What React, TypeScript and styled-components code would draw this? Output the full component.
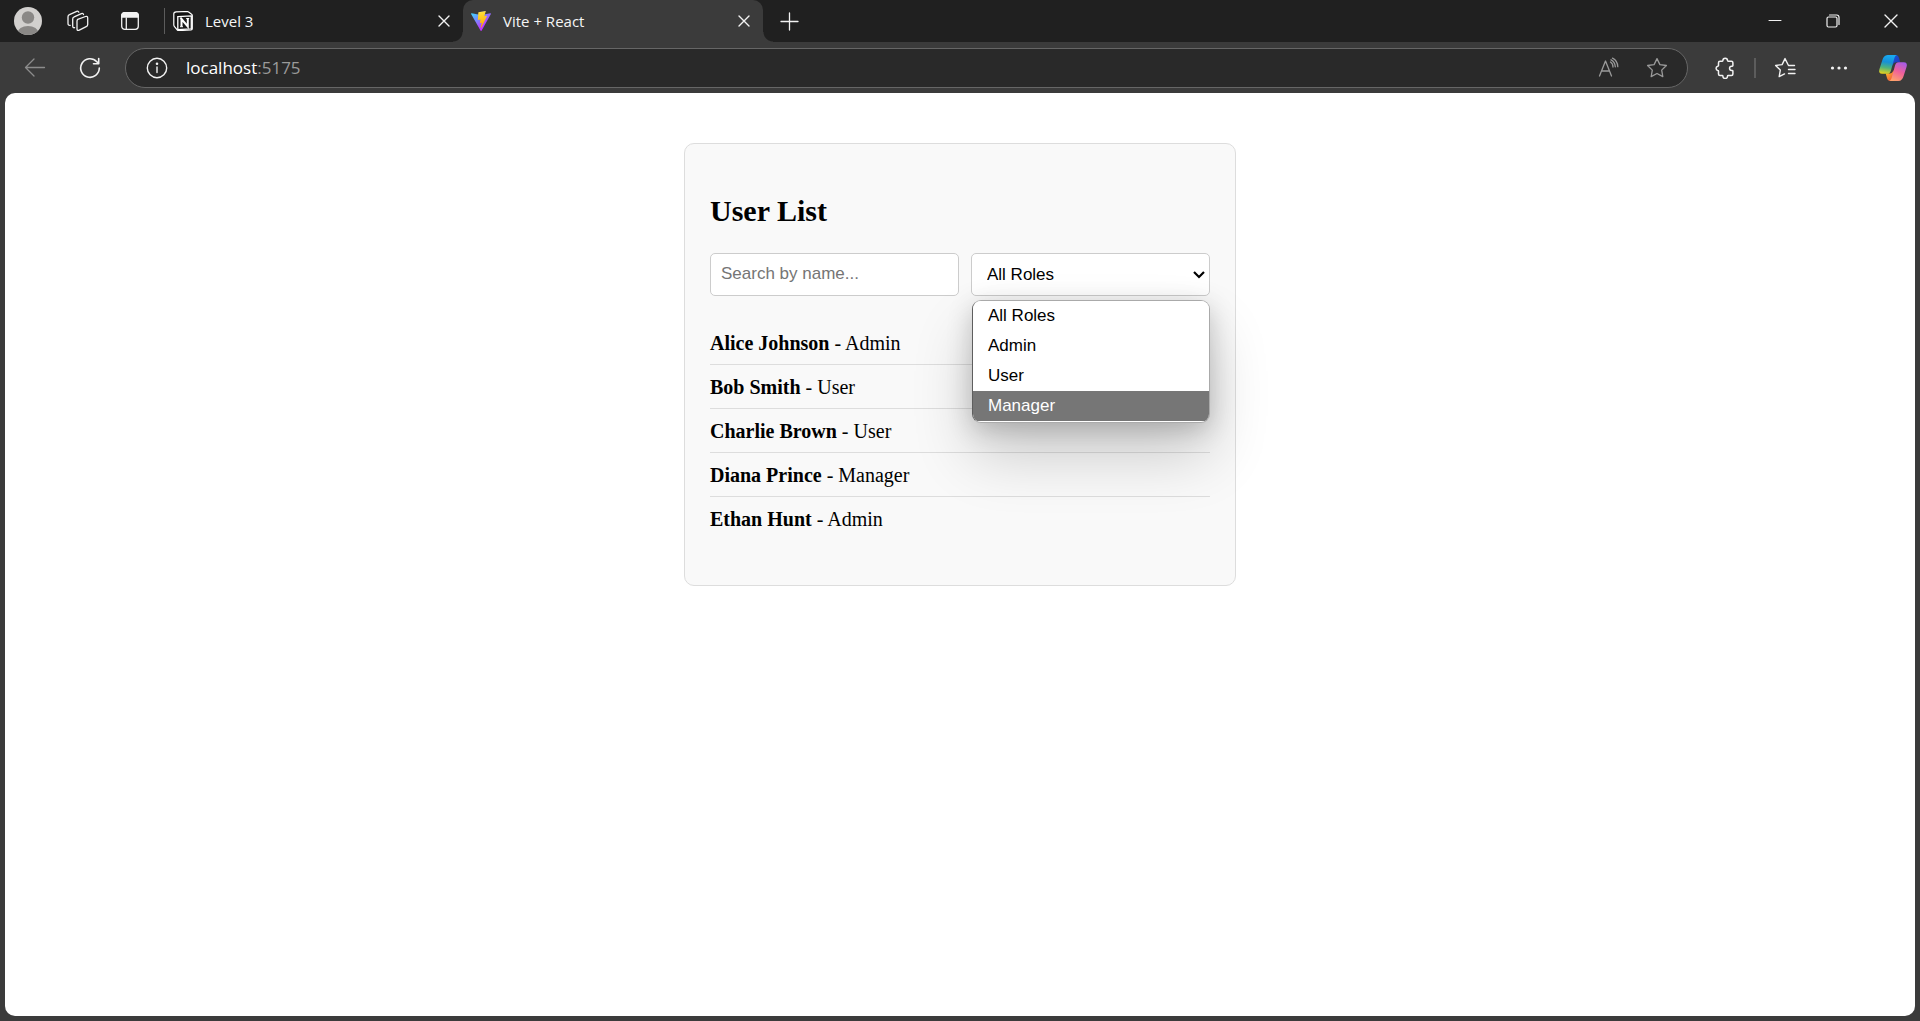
import React, { useState } from "react";
import styled, { createGlobalStyle } from "styled-components";

const UI = `"Open Sans", "Noto Sans", sans-serif`;
const SANS = `"Liberation Sans", Arial, sans-serif`;
const SERIF = `"Liberation Serif", "Times New Roman", serif`;

const GlobalStyle = createGlobalStyle`
  *, *::before, *::after { box-sizing: border-box; }
  body { margin: 0; background: #3b3b3b; }
`;

const Window = styled.div`
  display: flex;
  flex-direction: column;
  min-height: 100vh;
  background: #3b3b3b;
  font-family: ${UI};
`;

const TabBar = styled.header`
  display: flex;
  height: 42px;
  padding-left: 2px;
  background: #202020;
`;

const IconButton = styled.button<{ $width: number; $color?: string }>`
  display: flex;
  flex: none;
  align-items: center;
  justify-content: center;
  width: ${(p) => p.$width}px;
  padding: 0;
  border: 0;
  background: none;
  color: ${(p) => p.$color ?? "#f2f2f2"};
`;

const Divider = styled.span<{ $height: number; $thick?: boolean }>`
  flex: none;
  align-self: center;
  width: ${(p) => (p.$thick ? 2 : 1)}px;
  height: ${(p) => p.$height}px;
  margin: ${(p) => (p.$thick ? "0 2px" : "0 0 0 7px")};
  background: #5c5c5c;
`;

const Tabs = styled.nav`
  display: flex;
`;

const Tab = styled.div<{ $active?: boolean }>`
  position: relative;
  display: flex;
  align-items: center;
  width: ${(p) => (p.$active ? 300 : 298)}px;
  padding: 0 7px 0 8px;
  border-radius: 10px 10px 0 0;
  background: ${(p) => (p.$active ? "#3b3b3b" : "transparent")};

  &::before,
  &::after {
    content: "";
    display: ${(p) => (p.$active ? "block" : "none")};
    position: absolute;
    bottom: 0;
    width: 10px;
    height: 10px;
  }
  &::before {
    left: -10px;
    background: radial-gradient(circle at 0 0, transparent 9px, #3b3b3b 10px);
  }
  &::after {
    right: -10px;
    background: radial-gradient(circle at 100% 0, transparent 9px, #3b3b3b 10px);
  }
`;

const TabTitle = styled.a`
  display: flex;
  flex: 1;
  align-items: center;
  gap: 12px;
  color: #f5f5f5;
  font-size: 15px;
  line-height: 20px;
  text-decoration: none;
`;

const WindowControls = styled.div`
  display: flex;
  margin-left: auto;
`;

const Toolbar = styled.div`
  display: flex;
  padding: 6px 0 5px 7px;
`;

const AddressBar = styled.div`
  display: flex;
  flex: 1;
  height: 40px;
  margin: 0 10px 0 8px;
  padding: 0 6px 0 10px;
  border: 1px solid #666;
  border-radius: 20px;
  background: #292929;
`;

const Address = styled.div`
  flex: 1;
  align-self: center;
  padding-left: 8px;
  color: #fff;
  font-size: 17px;
  line-height: 24px;
`;

const Port = styled.span`
  color: #9a9a9a;
`;

const Page = styled.main`
  flex: 1;
  margin: 0 5px 5px;
  padding: 50px 20px;
  border-radius: 10px;
  background: #fff;
`;

const Card = styled.section`
  max-width: 552px;
  margin: 0 auto;
  padding: 25px;
  border: 1px solid #ddd;
  border-radius: 10px;
  background: #f9f9f9;
  color: #000;
  font-family: ${SERIF};
  font-size: 20px;
  line-height: 23px;
`;

const Heading = styled.h2`
  margin: 25px 0;
  font-size: 30px;
  line-height: 34px;
`;

const Filters = styled.div`
  display: flex;
  gap: 12px;
  margin-bottom: 25px;
`;

const SearchInput = styled.input`
  flex: 1;
  min-width: 0;
  height: 43px;
  padding: 0 10px 2px;
  border: 1px solid #ccc;
  border-radius: 5px;
  background: #fff;
  font-family: ${SANS};
  font-size: 17px;
  &::placeholder { color: #757575; }
`;

const RoleField = styled.div`
  position: relative;
  flex: 0 0 239px;
`;

const RoleSelect = styled.select`
  width: 100%;
  height: 43px;
  padding: 0 15px;
  border: 1px solid #ccc;
  border-radius: 5px;
  background: #fff;
  color: #000;
  font-family: ${SANS};
  font-size: 17px;
  appearance: none;
`;

const Chevron = styled.svg`
  position: absolute;
  top: 17px;
  right: 5px;
  pointer-events: none;
`;

const Options = styled.ul`
  position: absolute;
  top: 47px;
  right: 0;
  left: 1px;
  z-index: 1;
  margin: 0;
  padding: 0 0 1px;
  overflow: hidden;
  border: 1px solid #aaa;
  border-left-color: #5e5e5e;
  border-radius: 9px;
  background: #fff;
  box-shadow: 0 32px 60px rgba(0, 0, 0, 0.19), 0 6px 26px rgba(0, 0, 0, 0.19);
  list-style: none;
`;

const Option = styled.li<{ $highlighted: boolean }>`
  padding: 0 15px;
  background: ${(p) => (p.$highlighted ? "#767676" : "#fff")};
  color: ${(p) => (p.$highlighted ? "#fff" : "#000")};
  font-family: ${SANS};
  font-size: 17px;
  line-height: 30px;
`;

const UserList = styled.ul`
  margin: 0 0 20px;
  padding: 0;
  list-style: none;
`;

const UserRow = styled.li`
  padding: 11px 0 9px;
  border-bottom: 1px solid #ddd;
  &:last-child { border-bottom: 0; }
`;

type IconProps = { size?: number; width?: number; children: React.ReactNode };
const Icon = ({ size = 20, width = 1.3, children }: IconProps) => (
  <svg width={size} height={size} viewBox={`0 0 ${size} ${size}`} fill="none" stroke="currentColor"
    strokeWidth={width} strokeLinecap="round" strokeLinejoin="round" aria-hidden="true">
    {children}
  </svg>
);

const Avatar = () => (
  <svg width="28" height="28" viewBox="0 0 28 28" aria-hidden="true">
    <clipPath id="avatar"><circle cx="14" cy="14" r="14" /></clipPath>
    <g clipPath="url(#avatar)">
      <path fill="#d2d0ce" d="M0 0h28v28H0z" />
      <circle cx="14" cy="10.5" r="6.2" fill="#8a8886" />
      <ellipse cx="14" cy="26" rx="10.5" ry="7" fill="#8a8886" />
    </g>
  </svg>
);

const WorkspacesIcon = () => (
  <Icon size={22}>
    <path d="M10.7 9.4 18.5 6.500q2.200-.700 2.200 1.400v6.600q0 1.600-1.500 2.200l-6.900 3.500q-2.300.900-2.300-1.300v-7.400q0-1.600.7-2.100Z" />
    <path d="M7.600 17.700q-1.900.300-1.900-1.600V9q0-1.600 1.500-2.200l7.200-3.200q1.700-.600 2.100.900" />
    <path d="M3.200 15.300Q1 15.600 1 13.600V6.700q0-1.500 1.500-2.100l7.200-3.200q1.600-.600 2.100.800" />
  </Icon>
);

const TabActionsIcon = () => (
  <Icon size={20}>
    <rect x="1.700" y="1.700" width="16.600" height="16.600" rx="3" />
    <path d="M1.700 6V4.700a3 3 0 0 1 3-3h10.600a3 3 0 0 1 3 3V6Z" fill="currentColor" />
    <path d="M6.300 7v11" />
  </Icon>
);

const NotionIcon = () => (
  <svg width="20" height="20" viewBox="0 0 20 20" fill="none" aria-hidden="true">
    <path d="M3.200.9 13.800.500q1 0 1.800.500l3 2.300q.700.500.700 1.300v13q0 1.300-1.300 1.400l-12.200.6q-1 0-1.600-.8L1.300 15.300q-.500-.600-.500-1.500V2.700Q.8 1.200 3.200.9Z" fill="#111" stroke="#fff" strokeWidth="1.200" strokeLinejoin="round" />
    <path d="m4.800 5.600 13.500-.7v13l-13.500.7Z" fill="#1a1a1a" stroke="#fff" strokeWidth="1.300" />
    <path d="M8.500 15.500V8l6.300 7.500V8" stroke="#fff" strokeWidth="2" />
    <path d="M6.900 7.700h2.300m4-.2h3M7 15.700h3" stroke="#fff" strokeWidth="1" />
  </svg>
);

const ViteIcon = () => (
  <svg width="20" height="20" viewBox="0 0 256 257" aria-hidden="true">
    <defs>
      <linearGradient id="va" x1="-.8%" x2="57.600%" y1="7.700%" y2="78.400%">
        <stop offset="0" stopColor="#41D1FF" /><stop offset="1" stopColor="#BD34FE" />
      </linearGradient>
      <linearGradient id="vb" x1="43.400%" x2="50.300%" y1="2.200%" y2="89%">
        <stop offset="0" stopColor="#FFEA83" /><stop offset=".083" stopColor="#FFDD35" /><stop offset="1" stopColor="#FFA800" />
      </linearGradient>
    </defs>
    <path fill="url(#va)" d="M255.153 37.938 134.897 252.976c-2.483 4.440-8.862 4.466-11.382.048L.875 37.958c-2.746-4.814 1.371-10.646 6.827-9.670l120.385 21.517a6.537 6.537 0 0 0 2.322-.004l117.867-21.483c5.438-.991 9.574 4.796 6.877 9.620Z" />
    <path fill="url(#vb)" d="M185.432.063 96.440 17.501a3.268 3.268 0 0 0-2.634 3.014l-5.474 92.456a3.268 3.268 0 0 0 3.997 3.378l24.777-5.718c2.318-.535 4.413 1.507 3.936 3.838l-7.361 36.047c-.495 2.426 1.782 4.500 4.151 3.780l15.304-4.649c2.372-.720 4.652 1.360 4.150 3.788l-11.698 56.621c-.732 3.542 3.979 5.473 5.943 2.437l1.313-2.028 72.516-144.720c1.215-2.423-.880-5.186-3.540-4.672l-25.505 4.922c-2.396.462-4.435-1.770-3.759-4.114l16.646-57.705c.677-2.350-1.370-4.583-3.769-4.113Z" />
  </svg>
);

const CloseIcon = ({ size = 12 }: { size?: number }) => (
  <Icon size={size} width={1.400}>
    <path d={`M1 1 ${size - 1} ${size - 1}M${size - 1} 1 1 ${size - 1}`} />
  </Icon>
);

const PuzzleIcon = () => (
  <Icon size={22} width={1.500}>
    <path d="M6 4.300h2.200c.500 0 .700-.300.700-.700a2.300 2.300 0 0 1 4.600 0c0 .400.200.700.700.700h3.200c.900 0 1.500.600 1.500 1.500v2.700c0 .500-.300.700-.700.700h-.500a2.100 2.100 0 0 0 0 4.300h.5c.400 0 .700.200.700.700v2.800c0 .900-.600 1.500-1.500 1.500h-3.200c-.5 0-.7.300-.7.700a2.300 2.300 0 0 1-4.600 0c0-.400-.2-.7-.7-.7H6c-.9 0-1.500-.6-1.500-1.500v-2.800c0-.5-.3-.7-.7-.7a2.200 2.200 0 0 1 0-4.300c.4 0 .7-.2.7-.7V5.800c0-.9.600-1.500 1.500-1.500Z" />
  </Icon>
);

const CopilotIcon = () => (
  <svg width="30" height="28" viewBox="0 0 30 28" aria-hidden="true">
    <defs>
      <linearGradient id="ca" x1="8" y1="1" x2="5" y2="20" gradientUnits="userSpaceOnUse">
        <stop offset="0" stopColor="#18a9f0" /><stop offset=".35" stopColor="#1690d8" /><stop offset=".65" stopColor="#4fb37c" /><stop offset="1" stopColor="#f2d416" />
      </linearGradient>
      <linearGradient id="cb" x1="25" y1="8" x2="16" y2="27" gradientUnits="userSpaceOnUse">
        <stop offset="0" stopColor="#a45be8" /><stop offset=".5" stopColor="#f0609a" /><stop offset="1" stopColor="#ffa36b" />
      </linearGradient>
      <linearGradient id="cc" x1="15" y1="1" x2="22" y2="9" gradientUnits="userSpaceOnUse">
        <stop offset="0" stopColor="#1556d8" /><stop offset="1" stopColor="#2536b8" />
      </linearGradient>
      <linearGradient id="cd" x1="8" y1="19" x2="15" y2="27" gradientUnits="userSpaceOnUse">
        <stop offset="0" stopColor="#ffb52b" /><stop offset="1" stopColor="#ee4a3b" />
      </linearGradient>
    </defs>
    <path fill="url(#cc)" d="M14 1h3.500c2 0 3 1 3.500 3l1.200 4.200h-3.700c-2.300 0-3.200 1-4 3.500L12 4Z" />
    <path fill="url(#cd)" d="M16 27h-3.500c-2 0-3-1-3.500-3l-1.300-4.400h3.900c2 0 3-1 3.700-3.300L18 24Z" />
    <path fill="url(#ca)" d="M17.500 1H9.600C6.800 1 5.300 3.100 4.300 6.300L1.400 15.200C.5 18 1.500 19.800 4.300 19.800h5c2 0 2.900-1 3.600-3.100L16 5.500C16.700 3 17.200 1.500 19 1Z" />
    <path fill="url(#cb)" d="M12.500 27h7.900c2.800 0 4.300-2.100 5.300-5.300l2.900-8.900c.9-2.800-.1-4.600-2.900-4.600h-5c-2 0-2.900 1-3.600 3.100L14 22.500c-.7 2.500-1.200 4-3 4.500Z" />
  </svg>
);

const users = [
  { name: "Alice Johnson", role: "Admin" },
  { name: "Bob Smith", role: "User" },
  { name: "Charlie Brown", role: "User" },
  { name: "Diana Prince", role: "Manager" },
  { name: "Ethan Hunt", role: "Admin" },
];
const roles = ["All Roles", "Admin", "User", "Manager"];

function BrowserTabs() {
  return (
    <TabBar>
      <IconButton $width={51} aria-label="Profile"><Avatar /></IconButton>
      <IconButton $width={49} aria-label="Workspaces"><WorkspacesIcon /></IconButton>
      <IconButton $width={55} aria-label="Tab actions"><TabActionsIcon /></IconButton>
      <Divider $height={26} />
      <Tabs>
        <Tab>
          <TabTitle href="#level-3"><NotionIcon />Level 3</TabTitle>
          <IconButton $width={24} aria-label="Close tab"><CloseIcon /></IconButton>
        </Tab>
        <Tab $active>
          <TabTitle href="#vite"><ViteIcon />Vite + React</TabTitle>
          <IconButton $width={24} aria-label="Close tab"><CloseIcon /></IconButton>
        </Tab>
      </Tabs>
      <IconButton $width={52} aria-label="New tab">
        <Icon size={19}><path d="M9.500 1v17M1 9.500h17" /></Icon>
      </IconButton>
      <WindowControls>
        <IconButton $width={58} aria-label="Minimise">
          <Icon size={14} width={1}><path d="M1 6.500h12" /></Icon>
        </IconButton>
        <IconButton $width={58} aria-label="Restore">
          <Icon size={14} width={1.200}>
            <rect x="1" y="3" width="10" height="10" rx="1.500" />
            <path d="M3.500 1h7.200Q13 1 13 3.300v7.200" />
          </Icon>
        </IconButton>
        <IconButton $width={58} aria-label="Close window"><CloseIcon size={14} /></IconButton>
      </WindowControls>
    </TabBar>
  );
}

const STAR = "m11 1.600 2.900 6 6.500.9-4.700 4.600 1.100 6.500L11 16.500l-5.800 3.100 1.100-6.500L1.600 8.500l6.500-.9Z";

function BrowserToolbar() {
  return (
    <Toolbar>
      <IconButton $width={55} $color="#8c8c8c" aria-label="Back">
        <Icon size={22}><path d="M20.500 10.500h-19M10 2 1.500 10.500 10 19" /></Icon>
      </IconButton>
      <IconButton $width={55} aria-label="Refresh">
        <Icon size={22} width={1.600}><path d="M20.300 11a9.300 9.300 0 1 1-2.500-6.300l1.700 1.800M19.700 1.500v5.200h-5.200" /></Icon>
      </IconButton>
      <AddressBar>
        <IconButton $width={42} aria-label="Site information">
          <Icon size={22} width={1.400}>
            <circle cx="11" cy="11" r="9.700" /><path d="M11 10v5.500" />
            <circle cx="11" cy="6.800" r=".6" fill="currentColor" />
          </Icon>
        </IconButton>
        <Address role="textbox" aria-label="Address">localhost<Port>:5175</Port></Address>
        <IconButton $width={48} $color="#9a9a9a" aria-label="Read aloud">
          <Icon size={22}>
            <path d="M1.500 19 7.500 4 13.500 19M3.500 14h8M12.500 5q2.500 1.500 2.500 5M13 2.800q4 2 4.300 7M14.500 1.200q5 2.500 5.300 8.500" />
          </Icon>
        </IconButton>
        <IconButton $width={48} $color="#9a9a9a" aria-label="Add to favourites">
          <Icon size={22}><path d={STAR} /></Icon>
        </IconButton>
      </AddressBar>
      <IconButton $width={54} aria-label="Extensions"><PuzzleIcon /></IconButton>
      <Divider $height={20} $thick />
      <IconButton $width={54} aria-label="Favourites">
        <Icon size={22} width={1.400}>
          <path d="M20.500 8.500h-6L11 1.600 8.100 7.600l-6.500.9 4.700 4.600-1.100 6.500 5.300-2.700M14.500 12.500h6.500M14.500 16.500h6.500" />
        </Icon>
      </IconButton>
      <IconButton $width={54} aria-label="Settings and more">
        <Icon size={18}>
          <g fill="currentColor" stroke="none">
            <circle cx="2.500" cy="9" r="1.600" /><circle cx="9" cy="9" r="1.600" /><circle cx="15.500" cy="9" r="1.600" />
          </g>
        </Icon>
      </IconButton>
      <IconButton $width={54} aria-label="Copilot"><CopilotIcon /></IconButton>
    </Toolbar>
  );
}

export default function App() {
  const [query, setQuery] = useState("");
  const [role, setRole] = useState("All Roles");
  const shown = users.filter(
    (u) => u.name.toLowerCase().includes(query.toLowerCase()) && (role === "All Roles" || u.role === role)
  );

  return (
    <Window>
      <GlobalStyle />
      <BrowserTabs />
      <BrowserToolbar />
      <Page>
        <Card>
          <Heading>User List</Heading>
          <Filters>
            <SearchInput type="text" aria-label="Search by name" placeholder="Search by name..." value={query}
              onChange={(e) => setQuery(e.target.value)} />
            <RoleField>
              <RoleSelect aria-label="Role" value={role} onChange={(e) => setRole(e.target.value)}>
                {roles.map((r) => <option key={r}>{r}</option>)}
              </RoleSelect>
              <Chevron width="12" height="10" viewBox="0 0 12 10" fill="none" stroke="#000" strokeWidth="2.200">
                <path d="m1 2 5 5 5-5" />
              </Chevron>
              <Options role="listbox" aria-label="Roles">
                {roles.map((r) => (
                  <Option key={r} role="option" aria-selected={r === role} $highlighted={r === "Manager"}
                    onClick={() => setRole(r)}>{r}</Option>
                ))}
              </Options>
            </RoleField>
          </Filters>
          <UserList>
            {shown.map((u) => (
              <UserRow key={u.name}><strong>{u.name}</strong> - {u.role}</UserRow>
            ))}
          </UserList>
        </Card>
      </Page>
    </Window>
  );
}
